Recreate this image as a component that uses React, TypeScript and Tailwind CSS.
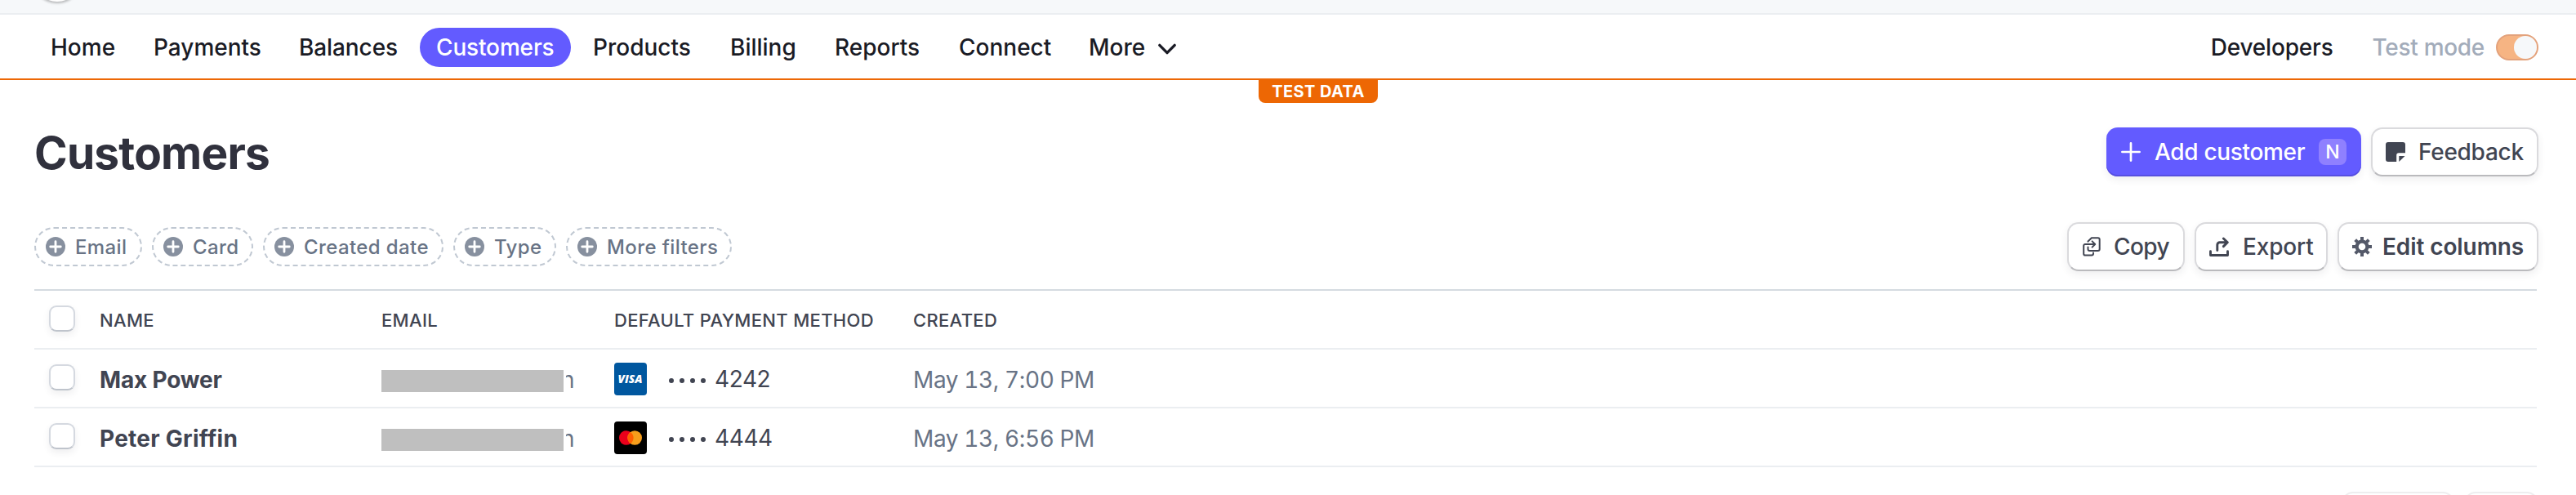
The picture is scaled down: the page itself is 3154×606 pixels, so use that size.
import type { ReactNode } from "react";

const navItems = [
  { label: "Home", tracking: "" },
  { label: "Payments", tracking: "" },
  { label: "Balances", tracking: "tracking-[-0.1px]" },
  { label: "Customers", tracking: "tracking-[-0.15px]", active: true },
  { label: "Products", tracking: "" },
  { label: "Billing", tracking: "" },
  { label: "Reports", tracking: "" },
  { label: "Connect", tracking: "" },
];

const filters = [
  { label: "Email", width: "w-[132px]" },
  { label: "Card", width: "w-[124px]" },
  { label: "Created date", width: "w-[221px]" },
  { label: "Type", width: "w-[126px]" },
  { label: "More filters", width: "w-[203px]" },
];

const customers = [
  { name: "Max Power", tracking: "tracking-[-0.2px]", brand: "visa", last4: "4242", created: "May 13, 7:00 PM" },
  { name: "Peter Griffin", tracking: "tracking-[0.25px]", brand: "mastercard", last4: "4444", created: "May 13, 6:56 PM" },
];

const columns = "grid grid-cols-[80px_345px_285px_366px_1fr]";

function ChevronIcon() {
  return (
    <svg className="mt-1 h-6 w-6" viewBox="0 0 24 24" fill="none" stroke="currentColor" strokeWidth="3.4" strokeLinecap="round" strokeLinejoin="round">
      <path d="M2.8 7.4 12 16.6l9.2-9.2" />
    </svg>
  );
}

function PlusIcon() {
  return (
    <svg className="h-6 w-6" viewBox="0 0 24 24" fill="none" stroke="currentColor" strokeWidth="2.7" strokeLinecap="round">
      <path d="M12 1.4v21.2M1.4 12h21.2" />
    </svg>
  );
}

function NoteIcon() {
  return (
    <svg className="h-6 w-6" viewBox="0 0 24 24" fill="#414552">
      <path d="M3 0h18a3 3 0 0 1 3 3v10.2h-8a2.8 2.8 0 0 0-2.8 2.8v8H3a3 3 0 0 1-3-3V3a3 3 0 0 1 3-3Z" />
      <path d="M16.3 17h7.2l-7.2 7Z" />
    </svg>
  );
}

function CopyIcon() {
  return (
    <svg className="h-6 w-6" viewBox="0 0 24 24" fill="none" stroke="#414552" strokeWidth="2" strokeLinecap="round" strokeLinejoin="round">
      <path d="M6.5 5.8V5.4l4.4-4.1h7.8a2 2 0 0 1 2 2v11.6a2 2 0 0 1-2 2H8.5a2 2 0 0 1-2-2V12.6" />
      <path d="M5.8 9H3a1.8 1.8 0 0 0-1.8 1.8v10A1.8 1.8 0 0 0 3 22.6h8a2 2 0 0 0 2-2v-1" />
      <path d="M6 9h9M11.6 5.4 15.2 9l-3.6 3.6" />
    </svg>
  );
}

function ExportIcon() {
  return (
    <svg className="h-6 w-6" viewBox="0 0 24 24" fill="none" stroke="#414552" strokeWidth="2.9" strokeLinecap="round" strokeLinejoin="round">
      <path d="M1.5 17.8v4.7h21v-4.7" />
      <path d="M9.8 16.6V9.7a3 3 0 0 1 3-3h9.4M17.4 2l4.9 4.7-4.9 4.9" />
    </svg>
  );
}

function GearIcon() {
  return (
    <svg className="h-6 w-6" viewBox="0 0 24 24" fill="none" stroke="#545969">
      <circle cx="12" cy="12" r="6.4" strokeWidth="4.2" />
      <path d="M12 0v5M12 19v5M0 12h5M19 12h5M3.7 3.7l3.7 3.7M16.6 16.6l3.7 3.7M3.7 20.3l3.7-3.7M16.6 7.4l3.7-3.7" strokeWidth="4" />
    </svg>
  );
}

function AddFilterIcon() {
  return (
    <svg className="h-6 w-6" viewBox="0 0 24 24">
      <circle cx="12" cy="12" r="12" fill="#87909f" />
      <path d="M12 5.7v12.6M5.7 12h12.6" stroke="#fff" strokeWidth="2.8" strokeLinecap="round" />
    </svg>
  );
}

function CardBrand({ brand }: { brand: string }) {
  if (brand === "visa") {
    return (
      <svg className="h-10 w-10" viewBox="0 0 40 40">
        <rect width="40" height="40" rx="4" fill="#00579f" />
        <text x="4.6" y="24.8" textLength="30" lengthAdjust="spacingAndGlyphs" className="fill-white font-['Open_Sans',sans-serif] text-[13.5px] font-extrabold italic">
          VISA
        </text>
      </svg>
    );
  }
  return (
    <svg className="h-10 w-10" viewBox="0 0 40 40">
      <rect width="40" height="40" rx="4" fill="#000" />
      <circle cx="14.8" cy="20" r="8.8" fill="#eb001b" />
      <circle cx="25.2" cy="20" r="8.8" fill="#f79e1b" />
      <path d="M20 12.9a8.8 8.8 0 0 1 0 14.2 8.8 8.8 0 0 1 0-14.2Z" fill="#ff5f00" />
    </svg>
  );
}

function OutlineButton({ className, children }: { className: string; children: ReactNode }) {
  return (
    <button
      className={`flex h-[60px] shrink-0 items-center rounded-[14px] border-2 border-[#dadadd] border-b-[#bababd] bg-white text-[28px] leading-none whitespace-nowrap text-[#414552] shadow-[0_4px_10px_rgba(48,49,61,0.08)] ${className}`}
    >
      {children}
    </button>
  );
}

function Checkbox() {
  return (
    <span className="mb-[2px] ml-[18px] block h-8 w-8 rounded-[9px] border-2 border-[#d5d9e0] border-b-[#bfc4cc] bg-white shadow-[0_4px_8px_rgba(48,49,61,0.08)]" />
  );
}

export default function App() {
  return (
    <div className="flex h-[606px] w-[3154px] flex-col overflow-hidden bg-white font-['Inter',sans-serif]">
      <div className="relative h-[18px] shrink-0 overflow-hidden border-b-2 border-[#ebeef1] bg-[#f6f8fa]">
        <span className="absolute -top-[58px] left-10 h-[60px] w-[60px] rounded-full bg-white shadow-[0_1px_3px_1px_rgba(0,0,0,0.25)]" />
      </div>

      <header className="relative flex h-20 shrink-0 items-center justify-between border-b-2 border-[#ed6704] pt-[2px] pr-[46px] pl-[42px] text-[28px] leading-none font-medium text-[#1a1b25]">
        <nav className="grid grid-cols-[126px_178px_168px_192px_168px_128px_152px_159px_140px] items-center">
          {navItems.map((item) => (
            <a
              key={item.label}
              className={`flex h-12 items-center justify-self-start rounded-full px-5 whitespace-nowrap ${item.tracking} ${item.active ? "bg-[#635bff] text-white" : ""}`}
            >
              {item.label}
            </a>
          ))}
          <a className="flex h-12 items-center gap-[15px] pl-5">
            <span>More</span>
            <ChevronIcon />
          </a>
        </nav>
        <div className="flex items-center">
          <span className="mr-12 tracking-[-0.2px]">Developers</span>
          <span className="mr-[14px] tracking-[-0.3px] text-[#a3acba]">Test mode</span>
          <span className="flex h-8 w-[52px] items-center justify-end rounded-full border-2 border-[#e3a27c] bg-[#f6b483]">
            <span className="h-7 w-7 rounded-full bg-[#f6f8fa]" />
          </span>
        </div>
        <span className="absolute top-[78px] left-[1541px] flex h-[30px] w-[146px] items-center justify-center rounded-b-lg bg-[#ed6704] pt-px text-[20px] leading-none font-bold tracking-[0.4px] whitespace-nowrap text-white">
          TEST DATA
        </span>
      </header>

      <main className="flex flex-col pl-[42px]">
        <div className="mt-[58px] mr-[46px] flex h-[60px] items-center justify-between">
          <h1 className="pt-[2px] text-[55px] leading-none font-bold tracking-[-0.8px] text-[#30313d]">Customers</h1>
          <div className="flex gap-3">
            <button className="flex h-[60px] w-[312px] items-center rounded-[14px] bg-[#635bff] pl-[18px] text-[28px] leading-none font-medium whitespace-nowrap text-white shadow-[inset_0_-2px_0_#574fe0,0_4px_10px_rgba(48,49,61,0.08)]">
              <PlusIcon />
              <span className="ml-[17px] tracking-[-0.33px]">Add customer</span>
              <span className="mr-[18px] ml-auto flex h-8 w-[34px] items-center justify-center rounded-lg bg-[#8f80ff] text-[23px]">N</span>
            </button>
            <OutlineButton className="w-[205px] gap-4 pl-4 font-medium tracking-[-0.28px]">
              <NoteIcon />
              <span>Feedback</span>
            </OutlineButton>
          </div>
        </div>

        <div className="mt-14 mr-[46px] flex h-[60px] items-center justify-between">
          <div className="flex gap-3">
            {filters.map((filter) => (
              <button
                key={filter.label}
                className={`flex h-12 items-center gap-3 rounded-full border-2 border-dashed border-[#c0c8d2] pl-3 text-[24px] leading-none font-medium tracking-[0.4px] whitespace-nowrap text-[#687385] ${filter.width}`}
              >
                <AddFilterIcon />
                <span className="pt-[2px]">{filter.label}</span>
              </button>
            ))}
          </div>
          <div className="flex gap-3">
            <OutlineButton className="w-[144px] gap-[14px] pl-[17px] font-medium tracking-[-0.6px]">
              <CopyIcon />
              <span>Copy</span>
            </OutlineButton>
            <OutlineButton className="w-[163px] gap-[17px] pl-4 font-medium tracking-[-0.15px]">
              <ExportIcon />
              <span>Export</span>
            </OutlineButton>
            <OutlineButton className="w-[246px] gap-[13px] pl-4 font-semibold tracking-[-0.1px]">
              <GearIcon />
              <span>Edit columns</span>
            </OutlineButton>
          </div>
        </div>

        <div className="mt-[22px] mr-12 border-t-2 border-[#d5dbe1]">
          <div className={`${columns} h-[72px] items-center border-b-2 border-[#ebeef1] text-[22px] leading-none font-medium tracking-[0.32px] text-[#414552]`}>
            <Checkbox />
            <span className="pt-[2px]">NAME</span>
            <span className="pt-[2px]">EMAIL</span>
            <span className="pt-[2px]">DEFAULT PAYMENT METHOD</span>
            <span className="pt-[2px]">CREATED</span>
          </div>
          {customers.map((customer) => (
            <div key={customer.name} className={`${columns} h-[72px] items-center border-b-2 border-[#ebeef1] text-[28px] leading-none text-[#687385]`}>
              <Checkbox />
              <span className={`pt-1 font-bold text-[#414552] ${customer.tracking}`}>{customer.name}</span>
              <span className="relative flex h-7 w-[240px] items-center pt-1 pl-[220px]">
                n
                <span className="absolute top-1 left-0 h-[27px] w-[226px] border-r-[3px] border-white bg-[#bfbfbf]" />
              </span>
              <span className="flex items-center pt-[2px] text-[#414552]">
                <CardBrand brand={customer.brand} />
                <span className="ml-[27px] flex gap-[7px] pt-1">
                  <i className="h-[6px] w-[6px] rounded-full bg-[#414552]" />
                  <i className="h-[6px] w-[6px] rounded-full bg-[#414552]" />
                  <i className="h-[6px] w-[6px] rounded-full bg-[#414552]" />
                  <i className="h-[6px] w-[6px] rounded-full bg-[#414552]" />
                </span>
                <span className="ml-[11px] tracking-[-0.4px]">{customer.last4}</span>
              </span>
              <span className="pt-1 tracking-[-0.4px] tabular-nums">{customer.created}</span>
            </div>
          ))}
        </div>

        <div className="mt-[30px] mr-[46px] flex justify-end gap-3">
          <span className="h-[60px] w-[138px] rounded-[14px] border-2 border-[#eeeeef]" />
          <span className="h-[60px] w-[91px] rounded-[14px] border-2 border-[#eeeeef]" />
        </div>
      </main>
    </div>
  );
}
